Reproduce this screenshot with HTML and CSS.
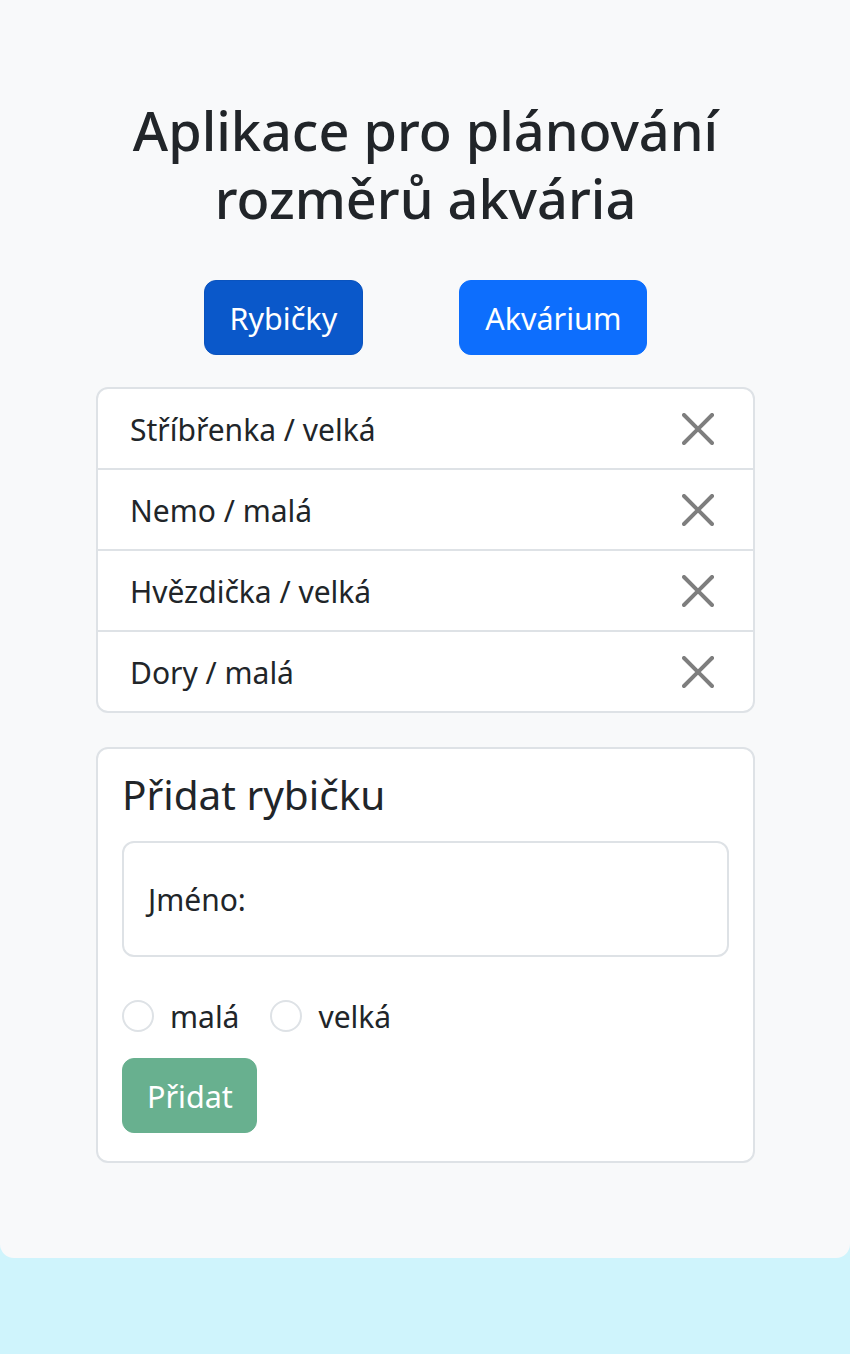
FILE: index.html
```html
<!DOCTYPE html>
<html lang="cs">
<head>
<meta charset="utf-8">
<title>Aplikace pro plánování rozměrů akvária</title>
<link rel="stylesheet" href="styles.css">
</head>
<body>
<main class="panel">
  <h1 class="title">Aplikace pro plánování rozměrů akvária</h1>
  <nav class="tabs">
    <button class="btn btn-tab btn-tab-active" type="button">Rybičky</button>
    <button class="btn btn-tab" type="button">Akvárium</button>
  </nav>
  <ul class="fish-list">
    <li class="fish-item"><span class="fish-name">Stříbřenka / velká</span><button class="close-btn" type="button" aria-label="Odebrat"><svg viewBox="0 0 16 16" width="32" height="32"><path d="M.293.293a1 1 0 0 1 1.414 0L8 6.586 14.293.293a1 1 0 1 1 1.414 1.414L9.414 8l6.293 6.293a1 1 0 0 1-1.414 1.414L8 9.414l-6.293 6.293a1 1 0 0 1-1.414-1.414L6.586 8 .293 1.707a1 1 0 0 1 0-1.414z"/></svg></button></li>
    <li class="fish-item"><span class="fish-name">Nemo / malá</span><button class="close-btn" type="button" aria-label="Odebrat"><svg viewBox="0 0 16 16" width="32" height="32"><path d="M.293.293a1 1 0 0 1 1.414 0L8 6.586 14.293.293a1 1 0 1 1 1.414 1.414L9.414 8l6.293 6.293a1 1 0 0 1-1.414 1.414L8 9.414l-6.293 6.293a1 1 0 0 1-1.414-1.414L6.586 8 .293 1.707a1 1 0 0 1 0-1.414z"/></svg></button></li>
    <li class="fish-item"><span class="fish-name">Hvězdička / velká</span><button class="close-btn" type="button" aria-label="Odebrat"><svg viewBox="0 0 16 16" width="32" height="32"><path d="M.293.293a1 1 0 0 1 1.414 0L8 6.586 14.293.293a1 1 0 1 1 1.414 1.414L9.414 8l6.293 6.293a1 1 0 0 1-1.414 1.414L8 9.414l-6.293 6.293a1 1 0 0 1-1.414-1.414L6.586 8 .293 1.707a1 1 0 0 1 0-1.414z"/></svg></button></li>
    <li class="fish-item"><span class="fish-name">Dory / malá</span><button class="close-btn" type="button" aria-label="Odebrat"><svg viewBox="0 0 16 16" width="32" height="32"><path d="M.293.293a1 1 0 0 1 1.414 0L8 6.586 14.293.293a1 1 0 1 1 1.414 1.414L9.414 8l6.293 6.293a1 1 0 0 1-1.414 1.414L8 9.414l-6.293 6.293a1 1 0 0 1-1.414-1.414L6.586 8 .293 1.707a1 1 0 0 1 0-1.414z"/></svg></button></li>
  </ul>
  <section class="add-card">
    <h2 class="add-title">Přidat rybičku</h2>
    <div class="floating">
      <input class="floating-input" id="fish-name" type="text">
      <label class="floating-label" for="fish-name">Jméno:</label>
    </div>
    <div class="radios">
      <div class="check">
        <input class="check-input" type="radio" name="size" id="size-small">
        <label class="check-label" for="size-small">malá</label>
      </div>
      <div class="check">
        <input class="check-input" type="radio" name="size" id="size-big">
        <label class="check-label" for="size-big">velká</label>
      </div>
    </div>
    <button class="btn btn-add" type="button" disabled>Přidat</button>
  </section>
</main>
</body>
</html>
```

FILE: styles.css
```css
* {
  box-sizing: border-box;
}

html, body {
  margin: 0;
  padding: 0;
}

body {
  background: #cff4fc;
  color: #212529;
  font-family: "Noto Sans", "Open Sans", sans-serif;
  font-size: 30px;
  line-height: 48px;
  min-height: 1354px;
}

.panel {
  background: #f8f9fa;
  padding: 96px 95px 95px 96px;
  border-radius: 0 0 14px 14px;
}

.title {
  margin: 0 0 48px;
  font-size: 54px;
  line-height: 68px;
  font-weight: 500;
  text-align: center;
}

.tabs {
  display: flex;
  justify-content: center;
  gap: 96px;
  margin-bottom: 32px;
}

.btn {
  font-family: inherit;
  font-size: 30.5px;
  line-height: 49px;
  padding: 13px 25px 11px;
  border: 1px solid transparent;
  border-radius: 12px;
  color: #fff;
  cursor: pointer;
}

.btn-tab {
  background: #0d6efd;
  border-color: #0d6efd;
}

.btn-tab-active {
  background: #0a58ca;
  border-color: #0a53be;
}

.fish-list {
  list-style: none;
  margin: 0 0 34px;
  padding: 0;
  background: #fff;
  border: 2px solid #dee2e6;
  border-radius: 12px;
}

.fish-item {
  display: flex;
  align-items: center;
  justify-content: space-between;
  padding: 17px 39px 15px 32px;
  line-height: 47px;
}

.fish-item + .fish-item {
  border-top: 2px solid #dee2e6;
}

.close-btn {
  display: flex;
  padding: 0;
  margin-top: -2px;
  border: 0;
  background: transparent;
  opacity: 0.5;
  cursor: pointer;
}

.close-btn svg {
  display: block;
  fill: #000;
}

.add-card {
  background: #fff;
  border: 2px solid #dee2e6;
  border-radius: 12px;
  padding: 22px 24px 28px;
}

.add-title {
  margin: 0 0 22px;
  font-size: 40.5px;
  line-height: 48px;
  font-weight: 400;
}

.floating {
  position: relative;
  margin-bottom: 34px;
}

.floating-input {
  display: block;
  width: 100%;
  height: 116px;
  border: 2px solid #dee2e6;
  border-radius: 12px;
  background: #fff;
  font-family: inherit;
  font-size: 30px;
  padding: 0 24px;
}

.floating-label {
  position: absolute;
  left: 2px;
  top: 0;
  height: 116px;
  display: flex;
  align-items: center;
  padding: 2px 24px 0;
  color: #212529;
  pointer-events: none;
}

.radios {
  display: flex;
  gap: 31px;
  margin-bottom: 17px;
}

.check {
  display: flex;
  align-items: center;
  gap: 16px;
}

.check-input {
  appearance: none;
  -webkit-appearance: none;
  margin: 0;
  width: 32px;
  height: 32px;
  border: 2px solid #dee2e6;
  border-radius: 50%;
  background: #fff;
}

.check-label {
  line-height: 48px;
  padding-top: 2px;
}

.btn-add {
  padding-left: 24px;
  padding-right: 23px;
  background: #198754;
  border-color: #198754;
  opacity: 0.65;
  cursor: default;
}
```
